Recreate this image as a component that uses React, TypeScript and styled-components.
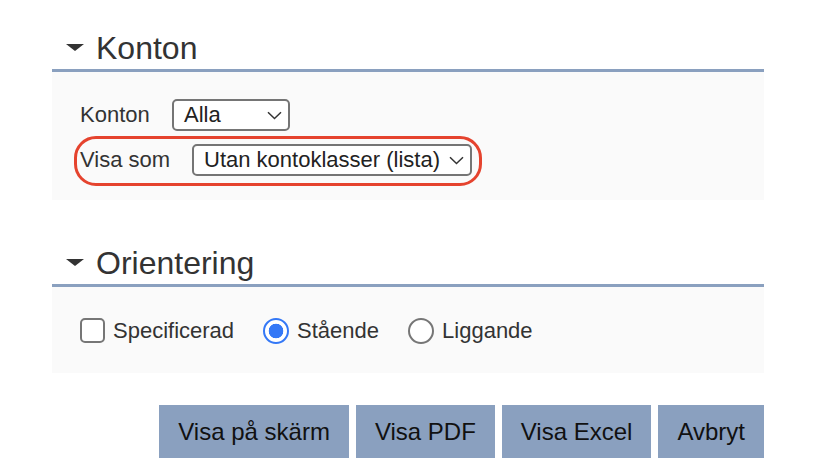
import React, { useState } from 'react';
import styled, { createGlobalStyle } from 'styled-components';

const GlobalStyle = createGlobalStyle`
  html, body {
    margin: 0;
    padding: 0;
    background: #fff;
    font-family: "Liberation Sans", Arial, sans-serif;
    color: #333;
  }
`;

const Page = styled.div`
  width: 712px;
  padding: 26px 0 0 52px;
`;

const Section = styled.section<{ gapBelow: number }>`
  margin-bottom: ${(p) => p.gapBelow}px;
`;

const Header = styled.div`
  display: flex;
  align-items: center;
  height: 43px;
  padding-left: 14px;
  border-bottom: 3px solid #8aa0bf;
`;

const Caret = styled.span`
  width: 0;
  height: 0;
  border-left: 9.5px solid transparent;
  border-right: 9.5px solid transparent;
  border-top: 7px solid #333;
  margin-right: 12px;
`;

const Title = styled.h2`
  margin: 0;
  font-size: 32px;
  font-weight: normal;
  color: #333;
  line-height: 1;
`;

const Panel = styled.div<{ height: number }>`
  background: #fafafa;
  height: ${(p) => p.height}px;
  box-sizing: border-box;
`;

const FieldRows = styled.div`
  display: flex;
  flex-direction: column;
  padding: 27px 0 0 28px;
`;

const Row = styled.div<{ highlighted?: boolean }>`
  display: flex;
  align-items: center;
  box-sizing: border-box;
  width: fit-content;
  ${(p) =>
    p.highlighted
      ? `
    margin: 5px 0 0 -6px;
    padding: 5px 7px 7px 3px;
    border: 3px solid #e5432e;
    border-radius: 22px;
  `
      : ''}
`;

const Label = styled.label<{ width: number }>`
  width: ${(p) => p.width}px;
  font-size: 22px;
  color: #333;
`;

const SelectBox = styled.div<{ width: number }>`
  display: flex;
  align-items: center;
  justify-content: space-between;
  box-sizing: border-box;
  width: ${(p) => p.width}px;
  height: 32px;
  padding: 0 6px 0 10px;
  border: 2px solid #757575;
  border-radius: 5px;
  background: #fff;
  font-size: 22px;
  color: #222;
`;

const Chevron = () => (
  <svg width="15" height="9" viewBox="0 0 15 9" fill="none">
    <path d="M1 1.2 L7.5 7.5 L14 1.2" stroke="#333" strokeWidth="1.5" />
  </svg>
);

const OptionRow = styled.div`
  display: flex;
  align-items: center;
  padding: 31px 0 0 28px;
`;

const Option = styled.label<{ gapAfter: number }>`
  display: flex;
  align-items: center;
  height: 25px;
  margin-right: ${(p) => p.gapAfter}px;
  font-size: 22px;
  color: #333;
  cursor: pointer;
`;

const CheckBox = styled.span`
  width: 25px;
  height: 25px;
  box-sizing: border-box;
  border: 2px solid #767676;
  border-radius: 5px;
  background: #fff;
  margin-right: 8px;
`;

const Radio = styled.span<{ checked: boolean }>`
  width: 26px;
  height: 26px;
  box-sizing: border-box;
  border-radius: 50%;
  border: ${(p) => (p.checked ? '2.5px solid #3478f6' : '2px solid #767676')};
  background: ${(p) =>
    p.checked ? 'radial-gradient(circle, #3478f6 0 7px, #fff 7.6px)' : '#fff'};
  margin-right: 8px;
`;

const Actions = styled.div`
  display: flex;
  justify-content: flex-end;
  gap: 7px;
`;

const ActionButton = styled.button`
  height: 53px;
  padding: 0 19px;
  border: none;
  background: #8aa0bf;
  color: #111;
  font-family: "Liberation Sans", Arial, sans-serif;
  font-size: 24px;
  cursor: pointer;
`;

const App: React.FC = () => {
  const [orientation, setOrientation] = useState<'staende' | 'liggande'>('staende');

  return (
    <>
      <GlobalStyle />
      <Page>
        <Section gapBelow={41}>
          <Header>
            <Caret />
            <Title>Konton</Title>
          </Header>
          <Panel height={128}>
            <FieldRows>
              <Row>
                <Label width={92}>Konton</Label>
                <SelectBox width={118}>
                  Alla
                  <Chevron />
                </SelectBox>
              </Row>
              <Row highlighted>
                <Label width={112}>Visa som</Label>
                <SelectBox width={280}>
                  Utan kontoklasser (lista)
                  <Chevron />
                </SelectBox>
              </Row>
            </FieldRows>
          </Panel>
        </Section>

        <Section gapBelow={32}>
          <Header>
            <Caret />
            <Title>Orientering</Title>
          </Header>
          <Panel height={86}>
            <OptionRow>
              <Option gapAfter={29}>
                <CheckBox />
                Specificerad
              </Option>
              <Option gapAfter={29} onClick={() => setOrientation('staende')}>
                <Radio checked={orientation === 'staende'} />
                Stående
              </Option>
              <Option gapAfter={0} onClick={() => setOrientation('liggande')}>
                <Radio checked={orientation === 'liggande'} />
                Liggande
              </Option>
            </OptionRow>
          </Panel>
        </Section>

        <Actions>
          <ActionButton>Visa på skärm</ActionButton>
          <ActionButton>Visa PDF</ActionButton>
          <ActionButton>Visa Excel</ActionButton>
          <ActionButton>Avbryt</ActionButton>
        </Actions>
      </Page>
    </>
  );
};

export default App;
